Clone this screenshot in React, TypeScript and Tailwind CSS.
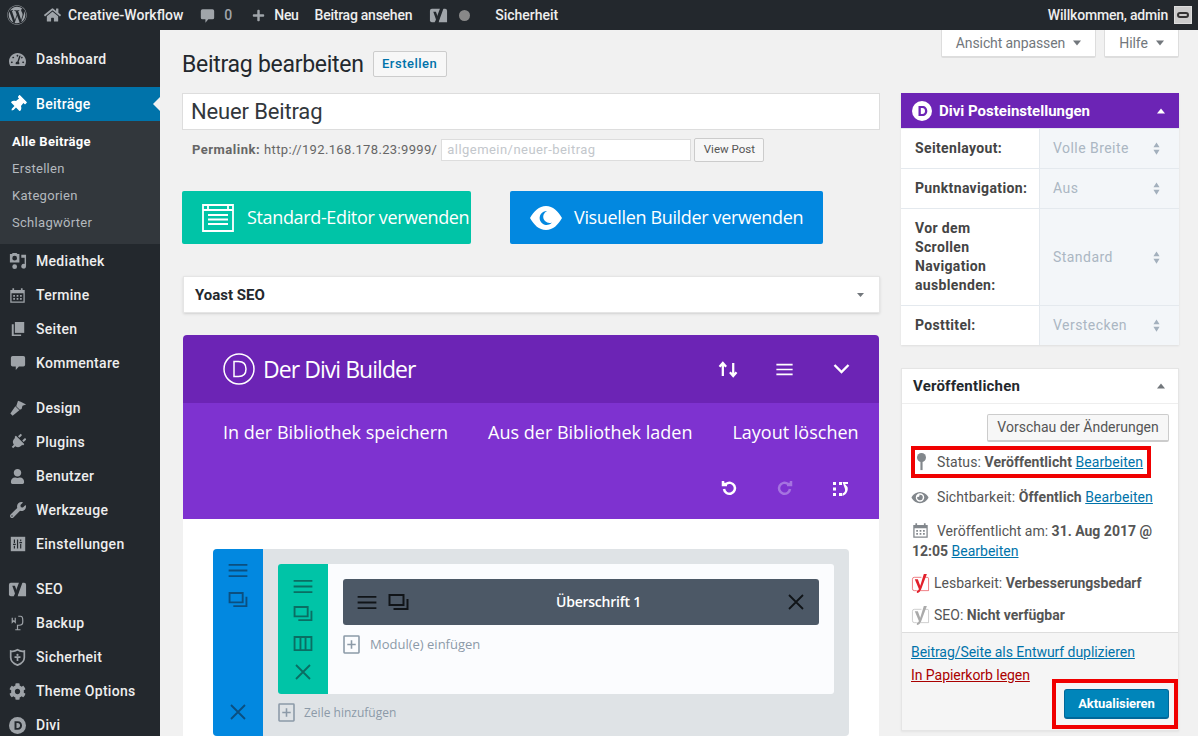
import React from 'react';
import { FaWordpress, FaHome, FaPlus, FaThumbtack, FaTachometerAlt, FaUser, FaWrench, FaCog, FaPlug, FaEye } from 'react-icons/fa';

type IconProps = { className?: string };

const YoastIcon: React.FC<IconProps> = ({ className }) => (
    <svg viewBox="0 0 20 20" className={className} fill="none">
        <path d="M11 3.500H3.500a2 2 0 0 0-2 2v10a2 2 0 0 0 2 2H6M14.500 3.500h2.500a1.500 1.500 0 0 1 1.500 1.500v12.500H10" stroke="currentColor" strokeWidth="1" opacity="0.6" />
        <path d="M13.500 0h3.200L10.500 16.500c-.8 2-2.200 3.300-4.300 3.500v-2.400c1.200-.2 1.800-.8 2.100-1.800L4 5.500h3.200l2.500 6.800z" fill="currentColor" />
    </svg>
);

const YoastSolid: React.FC<IconProps> = ({ className }) => (
    <svg viewBox="0 0 20 20" className={className} fill="currentColor">
        <path d="M3 3h8.500L7 15l-1 2H3a2 2 0 0 1-2-2V5a2 2 0 0 1 2-2z" />
        <path d="M13 3h4a2 2 0 0 1 2 2v12H10z" />
        <path d="M13.500 0h2.700L10 17c-.6 1.500-1.800 2.800-3.500 3v-2c1-.2 1.400-.8 1.600-1.700L4.500 6h2.800l2.200 6z" fill="#23282d" />
    </svg>
);

const MediaIcon: React.FC<IconProps> = ({ className }) => (
    <svg viewBox="0 0 20 20" className={className} fill="currentColor">
        <path d="M2 2h2l1-1h4l1 1h2v9H2zm5 2a2.500 2.500 0 1 0 0 5 2.500 2.500 0 0 0 0-5z" />
        <path d="M14 3h5v12a2.500 2.500 0 1 1-1.500-2.300V6H14z" />
        <circle cx="7" cy="15.500" r="2.500" />
    </svg>
);

const CalendarIcon: React.FC<IconProps> = ({ className }) => (
    <svg viewBox="0 0 20 20" className={className} fill="currentColor">
        <path fillRule="evenodd" d="M1.500 4H4V2h2v2h8V2h2v2h2.500v15h-17zM3 8v9.500h14V8z" />
        <path d="M5 10h2v2H5zm4 0h2v2H9zm4 0h2v2h-2zm-8 3.500h2v2H5zm4 0h2v2H9zm4 0h2v2h-2z" />
    </svg>
);

const BackupIcon: React.FC<IconProps> = ({ className }) => (
    <svg viewBox="0 0 20 24" className={className} fill="none" stroke="currentColor" strokeWidth="1.600">
        <path d="M3 5v6l2-2 2 2V5" />
        <path d="M11 3h3c3 0 3 3 3 5v3c0 3-2 4-5 4h-2v6M7 21h7" />
    </svg>
);

const ShieldIcon: React.FC<IconProps> = ({ className }) => (
    <svg viewBox="0 0 20 20" className={className} fill="none" stroke="currentColor" strokeWidth="2">
        <path d="M2 2.500c3 1 5.500 0 8-1.500 2.500 1.500 5 2.500 8 1.500V10c0 4.500-4 7.500-8 9-4-1.500-8-4.500-8-9z" />
        <circle cx="10" cy="7" r="1.300" fill="currentColor" stroke="none" />
        <path d="M6.500 9.500h7M10 9v5" />
    </svg>
);

const SlidersIcon: React.FC<IconProps> = ({ className }) => (
    <svg viewBox="0 0 20 20" className={className}>
        <rect x="2" y="2" width="16" height="16" fill="currentColor" />
        <path d="M6 5v4M6 12v3M4.500 10.500h3M13 5v2M13 10v5M11.500 8.500h3M9.500 5v10" stroke="#23282d" strokeWidth="1.300" fill="none" />
    </svg>
);

const BrushIcon: React.FC<IconProps> = ({ className }) => (
    <svg viewBox="0 0 20 20" className={className} fill="currentColor">
        <path d="M10 2l3 1 6 3-4 1.500-1 3.500-2 1-4-4z" />
        <path d="M7 8l4.500 4.500L4 18.500 1.500 16z" />
    </svg>
);

const PagesIcon: React.FC<IconProps> = ({ className }) => (
    <svg viewBox="0 0 18 20" className={className} fill="currentColor">
        <path d="M5 1h12v14H5z" />
        <path d="M1 4h2.500v13H13v2H1z" />
    </svg>
);

const BubbleIcon: React.FC<IconProps> = ({ className }) => (
    <svg viewBox="0 0 18 18" className={className} fill="currentColor">
        <path d="M3 1h12a2 2 0 0 1 2 2v8a2 2 0 0 1-2 2h-5l-3.500 4v-4H3a2 2 0 0 1-2-2V3a2 2 0 0 1 2-2z" />
    </svg>
);

const DiviRound: React.FC<{ className?: string; letter?: string }> = ({ className, letter = 'currentColor' }) => (
    <svg viewBox="0 0 20 20" className={className}>
        <circle cx="10" cy="10" r="10" fill="currentColor" />
        <path d="M6.500 5h3.800c3.200 0 5 2.100 5 5s-1.800 5-5 5H6.500zm2.300 2v6h1.400c1.800 0 2.800-1.200 2.800-3s-1-3-2.800-3z" fill={letter === 'currentColor' ? '#23282d' : letter} fillRule="evenodd" />
    </svg>
);

const Lines: React.FC<IconProps> = ({ className }) => (
    <svg viewBox="0 0 20 16" className={className} fill="none" stroke="currentColor" strokeWidth="2">
        <path d="M0 2h20M0 8h20M0 14h20" />
    </svg>
);

const Dup: React.FC<IconProps> = ({ className }) => (
    <svg viewBox="0 0 20 16" className={className} fill="none" stroke="currentColor" strokeWidth="2">
        <path d="M1 1h14v10H1zM19 5v10H5" />
    </svg>
);

const Cross: React.FC<IconProps> = ({ className }) => (
    <svg viewBox="0 0 16 16" className={className} fill="none" stroke="currentColor" strokeWidth="1.800">
        <path d="M1 1l14 14M15 1L1 15" />
    </svg>
);

const Cols: React.FC<IconProps> = ({ className }) => (
    <svg viewBox="0 0 20 16" className={className} fill="none" stroke="currentColor" strokeWidth="2">
        <path d="M1 1h18v14H1zM7.300 1v14M12.700 1v14" />
    </svg>
);

const PlusBox: React.FC<IconProps> = ({ className }) => (
    <svg viewBox="0 0 16 18" className={className} fill="none" stroke="currentColor" strokeWidth="1.500">
        <path d="M1.500 1h13a.6.600 0 0 1 .6.600v14.800a.6.600 0 0 1-.6.600h-13a.6.600 0 0 1-.6-.6V1.600a.6.600 0 0 1 .6-.6zM8 5v8M4 9h8" />
    </svg>
);

const Updown = () => (
    <svg viewBox="0 0 8 14" className="w-[7px] h-[13px] text-[#a3b0bd]" fill="currentColor">
        <path d="M4 0l3.500 5.500h-7zM4 14L.5 8.500h7z" />
    </svg>
);

const Caret: React.FC<IconProps> = ({ className }) => (
    <svg viewBox="0 0 10 6" className={className} fill="currentColor">
        <path d="M0 0h10L5 6z" />
    </svg>
);

const CaretUp: React.FC<IconProps> = ({ className }) => (
    <svg viewBox="0 0 10 6" className={className} fill="currentColor">
        <path d="M5 0l5 6H0z" />
    </svg>
);

const menu1 = [
    { label: 'Mediathek', icon: <MediaIcon className="w-[19px] h-[19px]" /> },
    { label: 'Termine', icon: <CalendarIcon className="w-[17px] h-[18px]" /> },
    { label: 'Seiten', icon: <PagesIcon className="w-[14px] h-[16px]" /> },
    { label: 'Kommentare', icon: <BubbleIcon className="w-[16px] h-[16px]" /> },
];
const menu2 = [
    { label: 'Design', icon: <BrushIcon className="w-[18px] h-[18px]" /> },
    { label: 'Plugins', icon: <FaPlug className="w-[16px] h-[16px] rotate-45" /> },
    { label: 'Benutzer', icon: <FaUser className="w-[15px] h-[15px]" /> },
    { label: 'Werkzeuge', icon: <FaWrench className="w-[16px] h-[16px]" /> },
    { label: 'Einstellungen', icon: <SlidersIcon className="w-[18px] h-[18px]" /> },
];
const menu3 = [
    { label: 'SEO', icon: <YoastSolid className="w-[19px] h-[19px]" /> },
    { label: 'Backup', icon: <BackupIcon className="w-[15px] h-[20px]" /> },
    { label: 'Sicherheit', icon: <ShieldIcon className="w-[17px] h-[19px]" /> },
    { label: 'Theme Options', icon: <FaCog className="w-[17px] h-[17px]" /> },
    { label: 'Divi', icon: <DiviRound className="w-[17px] h-[17px]" /> },
];

const MenuRow: React.FC<{ label: string; icon: React.ReactNode }> = ({ label, icon }) => (
    <div className="h-[34px] flex items-center text-[#eee] font-medium tracking-[0.3px]">
        <div className="w-[36px] flex justify-center text-[#9ea3a8] pr-[1px]">{icon}</div>
        <span>{label}</span>
    </div>
);

const Sidebar = () => (
    <div className="w-[160px] shrink-0 bg-[#23282d] pt-[12px] text-[14px]">
        <MenuRow label="Dashboard" icon={<FaTachometerAlt className="w-[17px] h-[17px]" />} />
        <div className="h-[11px]" />
        <div className="relative h-[34px] flex items-center bg-[#0073aa] text-white font-medium tracking-[0.3px]">
            <div className="w-[36px] flex justify-center pr-[1px]"><FaThumbtack className="w-[17px] h-[17px] rotate-45" /></div>
            <span>Beiträge</span>
            <div className="absolute right-0 top-[10px] w-0 h-0 border-y-[7px] border-y-transparent border-r-[7px] border-r-[#f1f1f1]" />
        </div>
        <div className="h-[123px] bg-[#32373c] pt-[7px] text-[13px] text-[#b4b9be] tracking-[0.3px]">
            <div className="h-[27px] pl-[12px] flex items-center text-white font-bold">Alle Beiträge</div>
            <div className="h-[27px] pl-[12px] flex items-center">Erstellen</div>
            <div className="h-[27px] pl-[12px] flex items-center">Kategorien</div>
            <div className="h-[27px] pl-[12px] flex items-center">Schlagwörter</div>
        </div>
        {menu1.map(m => <MenuRow key={m.label} {...m} />)}
        <div className="h-[11px]" />
        {menu2.map(m => <MenuRow key={m.label} {...m} />)}
        <div className="h-[11px]" />
        {menu3.map(m => <MenuRow key={m.label} {...m} />)}
    </div>
);

const AdminBar = () => (
    <div className="h-[30px] bg-[#23282d] flex items-center text-[14px] font-medium text-[#eee]">
        <FaWordpress className="ml-[7px] w-[20px] h-[20px] text-[#a0a5aa]" />
        <FaHome className="ml-[17px] w-[17px] h-[16px] text-[#a0a5aa]" />
        <span className="ml-[7px]">Creative-Workflow</span>
        <BubbleIcon className="ml-[17px] w-[15px] h-[16px] text-[#a0a5aa] mt-[1px]" />
        <span className="ml-[9px] text-[#a0a5aa]">0</span>
        <FaPlus className="ml-[20px] w-[13px] h-[13px] text-[#a0a5aa]" />
        <span className="ml-[9px] tracking-[-0.3px]">Neu</span>
        <span className="ml-[16px] tracking-[-0.25px]">Beitrag ansehen</span>
        <YoastSolid className="ml-[17px] w-[19px] h-[19px] text-[#a0a5aa]" />
        <div className="ml-[11px] w-[11px] h-[11px] rounded-full bg-[#888]" />
        <span className="ml-[25px]">Sicherheit</span>
        <span className="ml-auto tracking-[-0.2px]">Willkommen, admin</span>
        <div className="ml-[6px] mr-[6px] w-[18px] h-[18px] border border-[#ddd] bg-[#ccc] flex items-center justify-center">
            <div className="w-[12px] h-[6px] rounded-full border-2 border-[#333]" />
        </div>
    </div>
);

const EditorColumn = () => (
    <div className="w-[698px] shrink-0">
        <div className="flex items-center h-[26px] mt-[21px]">
            <h1 className="text-[23px] text-[#23282d] leading-none tracking-[-0.28px]">Beitrag bearbeiten</h1>
            <div className="ml-[9px] w-[74px] h-[26px] flex items-center justify-center bg-[#f7f7f7] border border-[#ccc] rounded-[2px] text-[13px] font-medium text-[#0073aa] tracking-[0.5px]">Erstellen</div>
        </div>
        <div className="mt-[16px] h-[37px] bg-white border border-[#ddd] flex items-center pl-[8px] text-[22px] text-[#32373c] tracking-[-0.15px]">Neuer Beitrag</div>
        <div className="mt-[8px] h-[24px] flex items-center pl-[10px] text-[13px] text-[#666] tracking-[0.3px] whitespace-nowrap">
            <span className="font-bold tracking-[0.5px]">Permalink:</span>
            <span className="ml-[4px] tracking-[0.35px]">http://192.168.178.23:9999/</span>
            <div className="ml-[4px] w-[250px] h-[22px] bg-white border border-[#ddd] flex items-center pl-[5px] text-[#c3c7cc] tracking-[0.45px]">allgemein/neuer-beitrag</div>
            <div className="ml-[3px] w-[70px] h-[24px] bg-[#f7f7f7] border border-[#ccc] rounded-[2px] flex items-center justify-center text-[11.500px] tracking-normal text-[#555]">View Post</div>
        </div>
        <div className="mt-[29px] flex gap-[39px] font-['Open_Sans',sans-serif] text-[18px] text-white tracking-[-0.35px] whitespace-nowrap">
            <div className="w-[289px] h-[53px] bg-[#00c4a7] rounded-[2px] flex items-center pl-[20px]">
                <svg viewBox="0 0 32 28" className="w-[32px] h-[28px]" fill="none" stroke="currentColor" strokeWidth="1.800">
                    <path d="M1 1h30v26H1zM1 6h30M6 1v5M26 1v5M6 11h20M6 15.500h20M6 20h20" />
                </svg>
                <span className="ml-[13px]">Standard-Editor verwenden</span>
            </div>
            <div className="w-[313px] h-[53px] bg-[#0288e0] rounded-[2px] flex items-center pl-[20px]">
                <svg viewBox="0 0 32 24" className="w-[32px] h-[24px]" fill="currentColor">
                    <path fillRule="evenodd" d="M16 0c7 0 12 5 16 12-4 7-9 12-16 12S4 19 0 12C4 5 9 0 16 0zm1 5a7 7 0 1 0 5 11.500 6 6 0 0 1-5-11.500z" />
                </svg>
                <span className="ml-[12px]">Visuellen Builder verwenden</span>
            </div>
        </div>
        <div className="mt-[32px] ml-[1px] h-[37px] bg-white border border-[#e5e5e5] shadow-sm flex items-center pl-[11px] pr-[15px] pt-[1px] text-[15px] font-bold text-[#23282d]">
            <span>Yoast SEO</span>
            <Caret className="ml-auto w-[7px] h-[6px] text-[#72777c]" />
        </div>
        <DiviBuilder />
    </div>
);

const DiviBuilder = () => (
    <div className="mt-[22px] ml-[1px] w-[696px] rounded-t-[4px] overflow-hidden bg-white font-['Open_Sans',sans-serif] text-white">
        <div className="h-[68px] bg-[#6c24b5] flex items-center pl-[40px] pr-[29px]">
            <svg viewBox="0 0 32 32" className="w-[32px] h-[32px]" fill="none" stroke="currentColor" strokeWidth="1.500">
                <circle cx="16" cy="16" r="15" />
                <path d="M11 8.500h4.500c5 0 7.500 3 7.500 7.500s-2.500 7.500-7.500 7.500H11z" />
            </svg>
            <span className="ml-[8px] text-[23px] tracking-[-0.95px]">Der Divi Builder</span>
            <svg viewBox="0 0 22 18" className="ml-auto w-[21px] h-[17px]" fill="none" stroke="currentColor" strokeWidth="2.400">
                <path d="M5 16V2M1.500 6L5 2l3.500 4M16 2v14M12.500 12l3.500 4 3.500-4" />
            </svg>
            <Lines className="ml-[37px] w-[17px] h-[13px]" />
            <svg viewBox="0 0 16 10" className="ml-[40px] w-[17px] h-[10px]" fill="none" stroke="currentColor" strokeWidth="2.400">
                <path d="M1 1l7 7 7-7" />
            </svg>
        </div>
        <div className="h-[116px] bg-[#7e32d0] pt-[16px] pl-[40px] pr-[30px]">
            <div className="flex h-[27px] items-center text-[18px] tracking-normal whitespace-nowrap">
                <span>In der Bibliothek speichern</span>
                <span className="ml-[40px]">Aus der Bibliothek laden</span>
                <span className="ml-[40px]">Layout löschen</span>
            </div>
            <div className="mt-[35px] flex items-center justify-end">
                <svg viewBox="0 0 16 16" className="w-[16px] h-[16px]" fill="none" stroke="currentColor" strokeWidth="2.500">
                    <path d="M3 8a5.500 5.500 0 1 0 2-5H2M2 0v4h4" />
                </svg>
                <svg viewBox="0 0 16 16" className="ml-[40px] w-[16px] h-[16px] text-[#a573e0]" fill="none" stroke="currentColor" strokeWidth="2.500">
                    <path d="M13 8a5.500 5.500 0 1 1-2-5h3M14 0v4h-4" />
                </svg>
                <svg viewBox="0 0 16 16" className="ml-[40px] w-[16px] h-[16px]" fill="currentColor">
                    <path d="M0 1h3v3H0zm0 5.500h3v3H0zM0 12h3v3H0zM6 1h3v3H6zm0 11h3v3H6zm3.500-11H15v2h-3l2.500 3c1 3.500-1 7.500-5 9v-2.500c2-.8 3-2.500 2.500-4.500z" />
                </svg>
            </div>
        </div>
        <div className="h-[217px] pt-[30px] px-[30px]">
            <div className="h-[187px] flex bg-[#dfe3e6] rounded-[4px] overflow-hidden">
                <div className="w-[50px] bg-[#0288e0] flex flex-col items-center pt-[14px] pb-[16px] text-[#0b4f80]">
                    <Lines className="w-[20px] h-[15px]" />
                    <Dup className="mt-[14px] w-[20px] h-[15px]" />
                    <Cross className="mt-auto w-[16px] h-[16px]" />
                </div>
                <div className="flex-1 pl-[15px] pr-[15px] pt-[15px]">
                    <div className="h-[130px] flex bg-[#fbfcfe] rounded-[3px] overflow-hidden">
                        <div className="w-[50px] bg-[#00c4a7] flex flex-col items-center pt-[15px] text-[#0a6e63]">
                            <Lines className="w-[20px] h-[15px]" />
                            <Dup className="mt-[12px] w-[20px] h-[15px]" />
                            <Cols className="mt-[15px] w-[20px] h-[15px]" />
                            <Cross className="mt-[13px] w-[16px] h-[16px]" />
                        </div>
                        <div className="flex-1 pl-[15px] pr-[15px] pt-[15px]">
                            <div className="h-[46px] bg-[#4c5866] rounded-[3px] flex items-center pl-[14px] pr-[15px] text-[#101418]">
                                <Lines className="w-[20px] h-[15px]" />
                                <Dup className="ml-[11px] w-[21px] h-[16px]" />
                                <span className="flex-1 text-center text-white text-[14px] font-semibold tracking-[-0.25px] -mt-[2px]">Überschrift 1</span>
                                <Cross className="w-[16px] h-[16px]" />
                            </div>
                            <div className="mt-[10px] flex items-center text-[#8c9aa8] text-[13px]">
                                <PlusBox className="w-[17px] h-[19px]" />
                                <span className="ml-[10px]">Modul(e) einfügen</span>
                            </div>
                        </div>
                    </div>
                    <div className="mt-[9px] flex items-center text-[#8c9aa8] text-[12px]">
                        <PlusBox className="w-[17px] h-[19px]" />
                        <span className="ml-[9px]">Zeile hinzufügen</span>
                    </div>
                </div>
            </div>
        </div>
    </div>
);

const settings = [
    { label: <>Seitenlayout:</>, value: 'Volle Breite', h: 'h-[40px]' },
    { label: <>Punktnavigation:</>, value: 'Aus', h: 'h-[40px]' },
    { label: <>Vor dem<br />Scrollen<br />Navigation<br />ausblenden:</>, value: 'Standard', h: 'h-[97px]' },
    { label: <>Posttitel:</>, value: 'Verstecken', h: 'h-[40px]' },
];

const RightColumn = () => (
    <div className="w-[280px] ml-[20px] shrink-0">
        <div className="flex justify-end gap-[8px] text-[14px] text-[#72777c] h-[28px] -mb-[28px] pr-[1px] tracking-[-0.1px]">
            <div className="w-[155px] h-[28px] bg-white border-x border-b-2 border-[#ddd] rounded-b-[2px] flex items-center justify-center gap-[8px]">
                <span>Ansicht anpassen</span>
                <Caret className="w-[8px] h-[6px]" />
            </div>
            <div className="w-[75px] h-[28px] bg-white border-x border-b-2 border-[#ddd] rounded-b-[2px] flex items-center justify-center gap-[8px]">
                <span>Hilfe</span>
                <Caret className="w-[8px] h-[6px]" />
            </div>
        </div>
        <div className="mt-[63px] ml-[1px] w-[278px] bg-white shadow-[0_1px_2px_rgba(0,0,0,0.08)]">
            <div className="h-[35px] bg-[#6c24b5] flex items-center pl-[11px] pr-[14px] pt-[1px] text-white text-[15px] font-bold">
                <DiviRound className="w-[20px] h-[20px]" letter="#6c24b5" />
                <span className="ml-[7px]">Divi Posteinstellungen</span>
                <CaretUp className="ml-auto w-[8px] h-[6px]" />
            </div>
            {settings.map((s, i) => (
                <div key={i} className={`flex ${s.h} border-t border-[#e4e9ee] first:border-t-0`}>
                    <div className="w-[138px] pl-[14px] self-center text-[14px] leading-[19px] font-bold text-[#444] tracking-[0.35px] whitespace-nowrap">{s.label}</div>
                    <div className="flex-1 bg-[#f3f6f9] border-l border-[#e4e9ee] pl-[13px] pr-[19px] flex items-center justify-between text-[14px] text-[#abb7c3] tracking-[0.45px]">
                        <span>{s.value}</span>
                        <Updown />
                    </div>
                </div>
            ))}
        </div>
        <div className="mt-[23px] ml-[1px] w-[278px] bg-white border border-[#e5e5e5] shadow-[0_1px_2px_rgba(0,0,0,0.06)] text-[14px] text-[#555]">
            <div className="h-[35px] border-b border-[#eee] flex items-center pl-[11px] pr-[13px] text-[15px] font-bold text-[#23282d] tracking-[0.2px]">
                <span>Veröffentlichen</span>
                <CaretUp className="ml-auto w-[8px] h-[6px] text-[#72777c]" />
            </div>
            <div className="pt-[10px] flex justify-end pr-[9px]">
                <div className="w-[182px] h-[28px] bg-[#f7f7f7] border border-[#ccc] border-b-2 rounded-[2px] flex items-center justify-center text-[#555]">Vorschau der Änderungen</div>
            </div>
            <div className="mt-[4px] ml-[9px] w-[240px] h-[32px] border-[4px] border-[#f00000] flex items-center pl-[2px] whitespace-nowrap">
                <svg viewBox="0 0 10 20" className="w-[9px] h-[18px] text-[#82878c]" fill="currentColor">
                    <circle cx="5" cy="5" r="5" />
                    <rect x="3.800" y="8" width="2.400" height="11" />
                </svg>
                <span className="ml-[11px] tracking-[0.07px]">Status: <b>Veröffentlicht</b> <a className="underline text-[#0073aa]">Bearbeiten</a></span>
            </div>
            <div className="mt-[9px] h-[20px] flex items-center pl-[9px] tracking-[0.07px]">
                <FaEye className="w-[18px] h-[15px] text-[#82878c]" />
                <span className="ml-[8px]">Sichtbarkeit: <b>Öffentlich</b> <a className="underline text-[#0073aa]">Bearbeiten</a></span>
            </div>
            <div className="mt-[14px] pl-[10px] leading-[20px]">
                <CalendarIcon className="inline-block align-[-3px] w-[17px] h-[18px] text-[#82878c]" />
                <span className="ml-[8px]">Veröffentlicht am: <b>31. Aug 2017 @</b></span>
                <br />
                <b>12:05</b> <a className="underline text-[#0073aa]">Bearbeiten</a>
            </div>
            <div className="mt-[12px] h-[20px] flex items-center pl-[9px]">
                <YoastIcon className="w-[19px] h-[19px] text-[#e2202b]" />
                <span className="ml-[4px]">Lesbarkeit: <b>Verbesserungsbedarf</b></span>
            </div>
            <div className="mt-[12px] h-[20px] flex items-center pl-[9px]">
                <YoastIcon className="w-[19px] h-[19px] text-[#aaa]" />
                <span className="ml-[4px]">SEO: <b>Nicht verfügbar</b></span>
            </div>
            <div className="mt-[7px] h-[98px] bg-[#f5f5f5] border-t border-[#ddd] pl-[9px] pt-[9px] relative tracking-[-0.05px]">
                <a className="block h-[20px] leading-[20px] underline text-[#0073aa]">Beitrag/Seite als Entwurf duplizieren</a>
                <a className="block mt-[3px] h-[20px] leading-[20px] underline text-[#a00]">In Papierkorb legen</a>
                <div className="absolute right-0 top-[46px] w-[126px] h-[50px] border-[4px] border-[#f00000] flex items-center justify-end pr-[5px]">
                    <div className="w-[105px] h-[30px] bg-[#0085ba] border border-[#006799] border-b-2 rounded-[3px] flex items-center justify-center text-white text-[13px] font-bold">Aktualisieren</div>
                </div>
            </div>
        </div>
    </div>
);

export default function App() {
    return (
        <div className="w-[1198px] h-[736px] overflow-hidden bg-[#f1f1f1] font-['Roboto',sans-serif] flex flex-col">
            <AdminBar />
            <div className="flex flex-1 min-h-0">
                <Sidebar />
                <div className="flex flex-1 pl-[22px]">
                    <EditorColumn />
                    <RightColumn />
                </div>
            </div>
        </div>
    );
}
